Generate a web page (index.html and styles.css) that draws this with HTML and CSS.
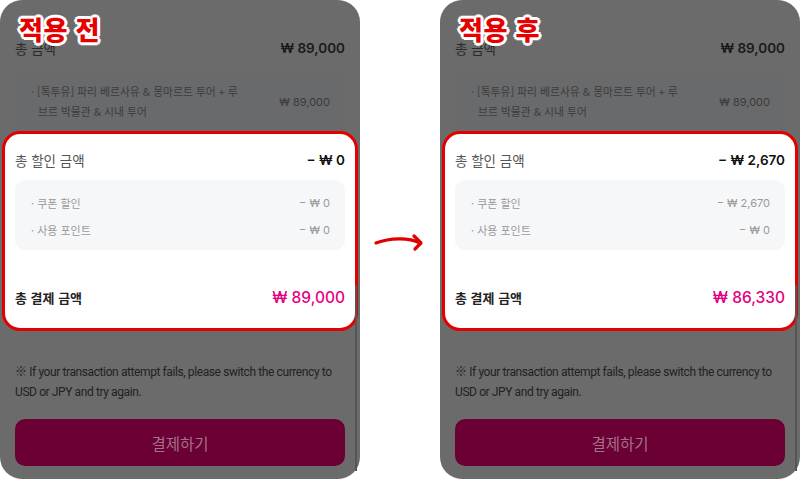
FILE: index.html
```html
<!DOCTYPE html>
<html lang="ko">
<head>
<meta charset="utf-8">
<link rel="stylesheet" href="styles.css">
</head>
<body>
<div class="stage">
  <section class="panel">
    <div class="tag">적용 전</div>
    <div class="row total"><span>총 금액</span><b>₩ 89,000</b></div>
    <div class="item">
      <p class="item-name">· [톡투유] 파리 베르사유 &amp; 몽마르트 투어 + 루<br>브르 박물관 &amp; 시내 투어</p>
      <span class="item-price">₩ 89,000</span>
    </div>
    <div class="card">
      <div class="row disc"><span>총 할인 금액</span><b>− ₩ 0</b></div>
      <div class="subbox">
        <div class="subrow"><span>· 쿠폰 할인</span><span>− ₩ 0</span></div>
        <div class="subrow"><span>· 사용 포인트</span><span>− ₩ 0</span></div>
      </div>
      <div class="row pay"><span>총 결제 금액</span><b>₩ 89,000</b></div>
    </div>
    <p class="note">※ If your transaction attempt fails, please switch the currency to<br>USD or JPY and try again.</p>
    <button class="btn">결제하기</button>
    <div class="scroll"></div>
  </section>

  <div class="arrow">
    <svg width="60" height="30" viewBox="0 0 60 30">
      <path d="M6 21 C 20 16, 38 15, 50 21" fill="none" stroke="#e10000" stroke-width="3.2" stroke-linecap="round"/>
      <path d="M44 14 L51 21 L45 27" fill="none" stroke="#e10000" stroke-width="3.2" stroke-linecap="round" stroke-linejoin="round"/>
    </svg>
  </div>

  <section class="panel">
    <div class="tag">적용 후</div>
    <div class="row total"><span>총 금액</span><b>₩ 89,000</b></div>
    <div class="item">
      <p class="item-name">· [톡투유] 파리 베르사유 &amp; 몽마르트 투어 + 루<br>브르 박물관 &amp; 시내 투어</p>
      <span class="item-price">₩ 89,000</span>
    </div>
    <div class="card">
      <div class="row disc"><span>총 할인 금액</span><b>− ₩ 2,670</b></div>
      <div class="subbox">
        <div class="subrow"><span>· 쿠폰 할인</span><span>− ₩ 2,670</span></div>
        <div class="subrow"><span>· 사용 포인트</span><span>− ₩ 0</span></div>
      </div>
      <div class="row pay"><span>총 결제 금액</span><b>₩ 86,330</b></div>
    </div>
    <p class="note">※ If your transaction attempt fails, please switch the currency to<br>USD or JPY and try again.</p>
    <button class="btn">결제하기</button>
    <div class="scroll"></div>
  </section>
</div>
</body>
</html>
```

FILE: styles.css
```css
* { box-sizing: border-box; }
html, body { margin: 0; padding: 0; background: #fff; }
body {
  width: 800px; height: 480px; overflow: hidden;
  font-family: Inter, "Noto Sans CJK KR", sans-serif;
}
.stage { display: flex; height: 480px; }
.panel {
  position: relative;
  width: 360px; height: 479px;
  background: #6b6b6b;
  border-radius: 22px;
  padding: 38px 15px 0;
  display: flex; flex-direction: column;
}
.arrow {
  width: 80px;
  display: flex; align-items: flex-start; justify-content: center;
  padding-top: 222px;
}
.tag {
  position: absolute; left: 19px; top: 11px;
  font-family: "Noto Sans CJK KR", sans-serif;
  font-weight: 900; font-size: 26px; line-height: 36px;
  color: #e60000;
  letter-spacing: 0.5px;
  text-shadow:
    2px 0 0 #fff, -2px 0 0 #fff, 0 2px 0 #fff, 0 -2px 0 #fff,
    2px 2px 0 #fff, -2px -2px 0 #fff, 2px -2px 0 #fff, -2px 2px 0 #fff,
    3px 0 0 #fff, -3px 0 0 #fff, 0 3px 0 #fff, 0 -3px 0 #fff;
}
.row {
  display: flex; justify-content: space-between; align-items: center;
  height: 20px;
}
.row span { font-family: "Noto Sans CJK KR", sans-serif; font-size: 13.5px; }
.row b { font-weight: 600; font-size: 13.5px; }
.total span { color: #2a2a2a; }
.total b { color: #1a1a1a; }
.item {
  margin-top: 13px;
  height: 60px;
  flex: none;
  display: flex; justify-content: space-between; align-items: center;
  padding: 0 15px 0 16px;
  background: #696a6b;
  border-radius: 10px 10px 0 0;
}
.item-name {
  margin: 0;
  font-family: "Noto Sans CJK KR", sans-serif;
  font-size: 10.8px; line-height: 20px; color: #3c3c3c;
  width: 220px;
  padding-left: 7px; text-indent: -7px;
}
.item-price { font-size: 11px; color: #3c3c3c; margin-top: 2px; }
.card {
  margin: 0 -13px;
  height: 200px;
  flex: none;
  background: #fff;
  border: 3px solid #e30000;
  border-radius: 18px;
  padding: 16px 10px 0;
  display: flex; flex-direction: column;
}
.disc span { color: #555; }
.disc b { color: #111; font-size: 13.5px; }
.subbox {
  margin-top: 10px;
  height: 70px;
  flex: none;
  background: #f6f7f9;
  border-radius: 10px;
  padding: 13px 15px 0 16px;
  display: flex; flex-direction: column; gap: 7px;
}
.subrow {
  display: flex; justify-content: space-between; align-items: center;
  height: 20px;
  font-size: 11px; color: #999;
}
.subrow span:first-child { font-family: "Noto Sans CJK KR", sans-serif; }
.pay { margin-top: 37px; }
.pay span { color: #222; font-weight: 600; font-size: 13px; }
.pay b { color: #e4007f; font-size: 15.5px; font-weight: 500; }
.note {
  margin: 31px 0 0;
  font-family: Roboto, "Noto Sans CJK KR", sans-serif;
  font-size: 12px; line-height: 20px; color: #222;
  letter-spacing: -0.4px;
  white-space: nowrap;
}
.btn {
  margin-top: 17px;
  height: 47px;
  flex: none;
  border: 0; border-radius: 10px;
  background: #6a0033;
  color: #a77189;
  font-family: "Noto Sans CJK KR", sans-serif;
  font-size: 15.5px;
}
.scroll {
  position: absolute; right: 3px; top: 285px; bottom: 8px;
  width: 2px; background: #555;
}
```
